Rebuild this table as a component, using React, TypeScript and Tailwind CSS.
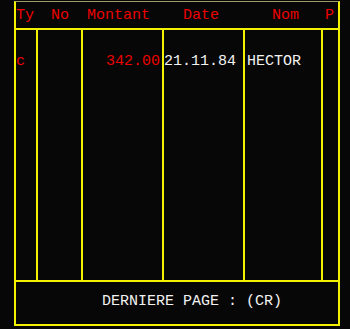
import React from 'react';

// Column widths include each cell's 2px right rule
const COLS = 'grid grid-cols-[22px_45px_81px_81px_78px_15px]';

const headers = [
  { label: 'Ty', pad: 'pl-0' },
  { label: 'No', pad: 'pl-[13px]' },
  { label: 'Montant', pad: 'pl-[4px]' },
  { label: 'Date', pad: 'pl-[19px]' },
  { label: 'Nom', pad: 'pl-[27px]' },
  { label: 'P', pad: 'pl-[2px]' },
];

const Cell: React.FC<{ last?: boolean; className?: string; children?: React.ReactNode }> = ({
  last,
  className = '',
  children,
}) => (
  <div className={`${last ? '' : 'border-r-2 border-[#f2f200]'} ${className}`}>{children}</div>
);

export default function App() {
  return (
    <div
      className="w-[350px] h-[329px] bg-[#070707] pt-[1px] text-[15px] leading-none"
      style={{ fontFamily: '"Liberation Mono", "DejaVu Sans Mono", monospace' }}
    >
      <div className="ml-[14px] w-[326px] border-x-2 border-b-2 border-t border-[#f2f200] border-t-[#9c9c68]">
        {/* header */}
        <div className={`${COLS} h-[28px] items-center border-b-2 border-[#f2f200] text-[#ec0000]`}>
          {headers.map((h) => (
            <div key={h.label} className={`${h.pad} pt-[1px] whitespace-nowrap`}>
              {h.label}
            </div>
          ))}
        </div>

        {/* ledger lines */}
        <div className={`${COLS} h-[252px] border-b-2 border-[#f2f200]`}>
          <Cell className="pt-[24px] text-[#ec0000]">c</Cell>
          <Cell />
          <Cell className="pt-[24px] pr-[2px] text-right text-[#ec0000]">342.00</Cell>
          <Cell className="pt-[24px] text-[#f2f2f2]">21.11.84</Cell>
          <Cell className="pt-[24px] pl-[2px] text-[#f2f2f2]">HECTOR</Cell>
          <Cell last />
        </div>

        {/* footer prompt */}
        <div className="h-[42px] flex items-center pl-[86px] pb-[3px] text-[#f2f2f2] whitespace-pre">
          DERNIERE PAGE : (CR)
        </div>
      </div>
    </div>
  );
}
